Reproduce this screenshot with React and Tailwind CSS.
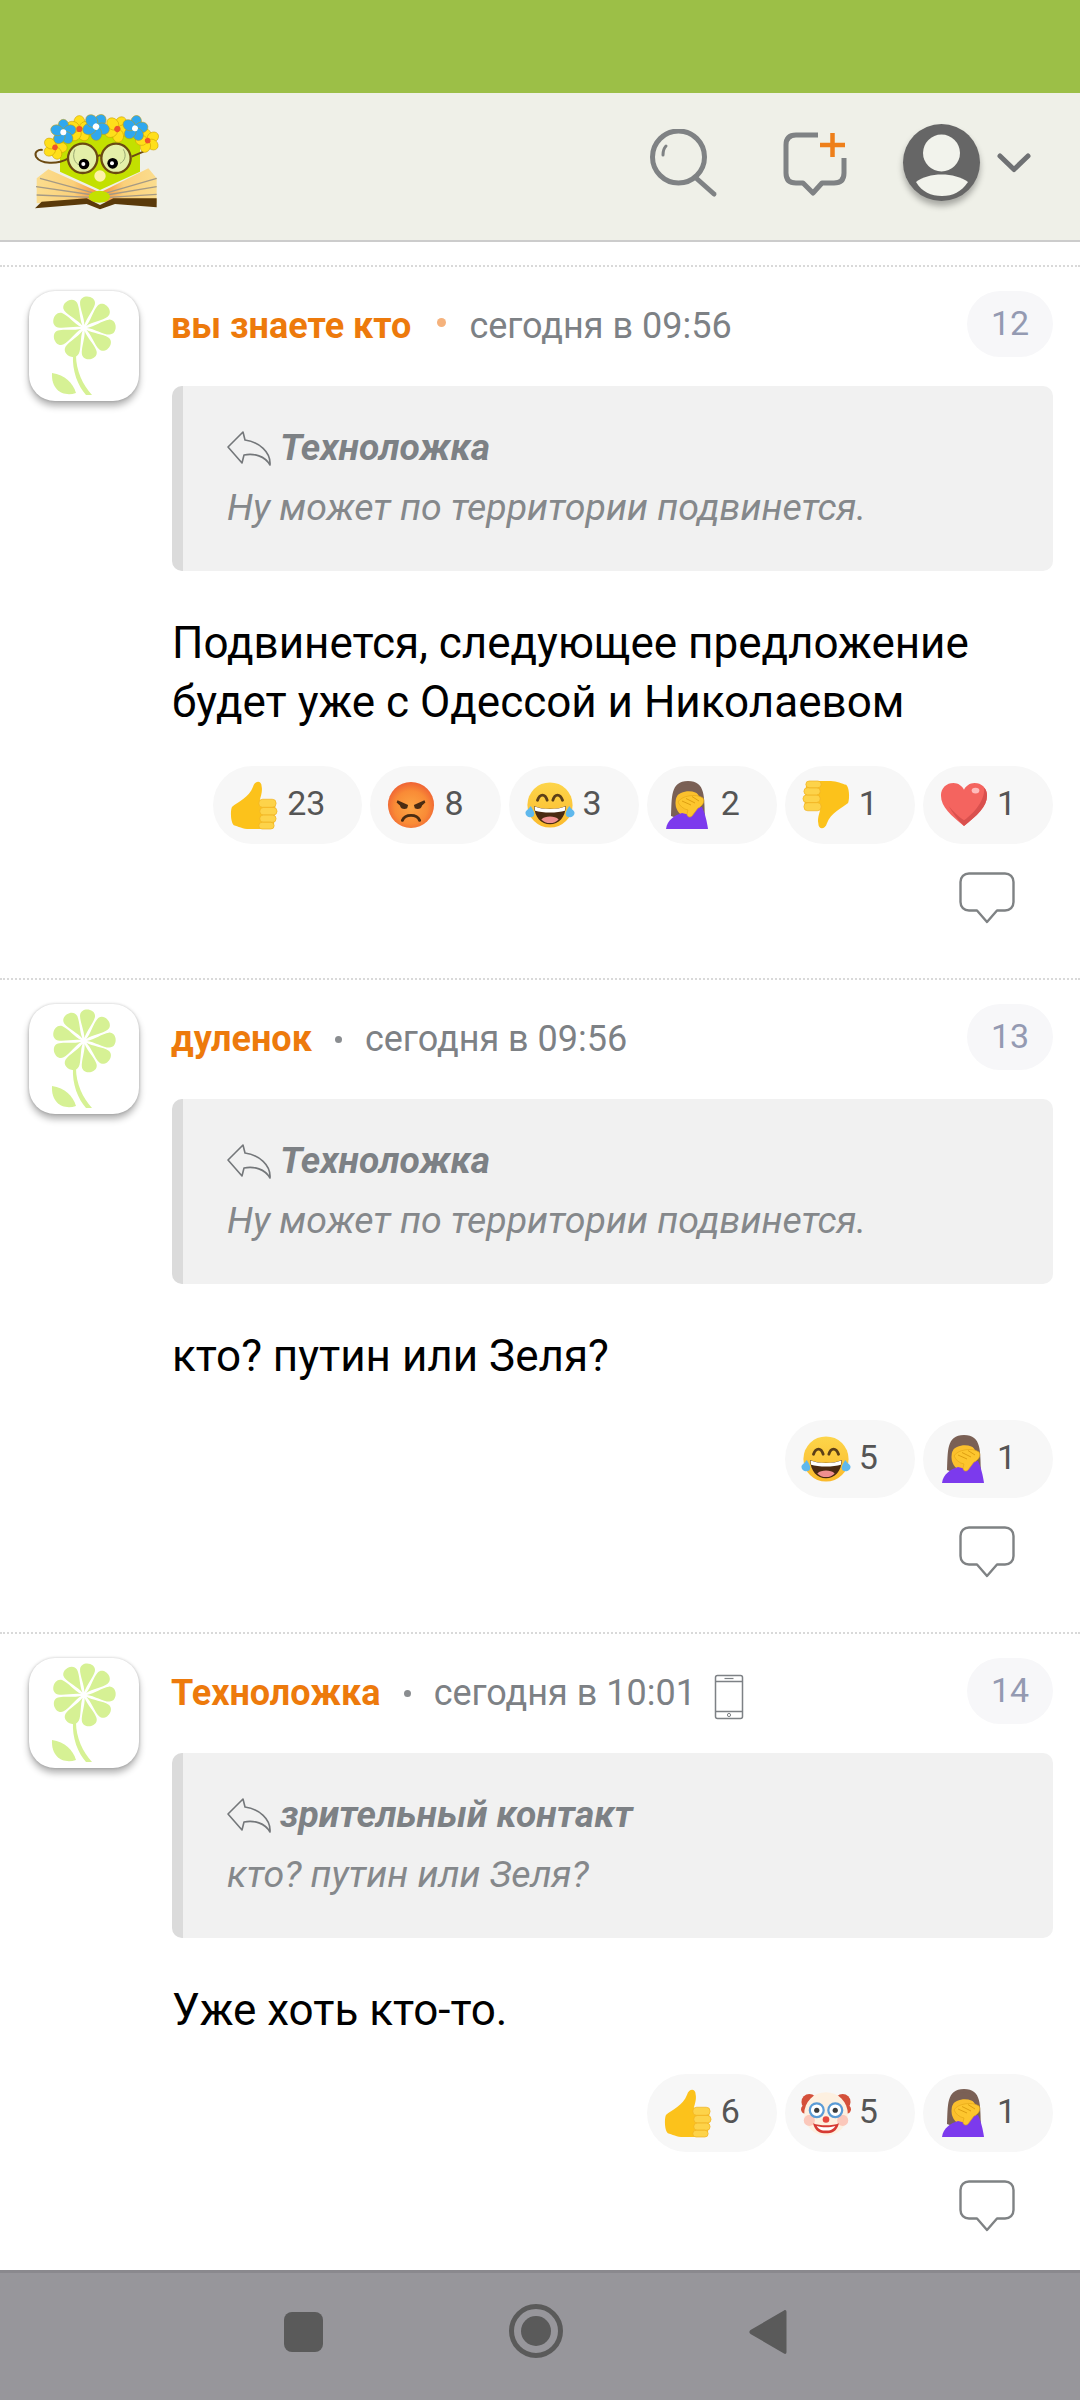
import React from "react";

// Emoji drawings, all on a 50x50 box
const Thumb = ({ down }) => (
  <svg viewBox="0 0 50 50" className="w-[48px] h-[50px]">
    <g transform={down ? "translate(50 50) scale(-1 -1)" : undefined}>
      <path d="M2 27C8 22 20 17 24 6C26 -1 33 -1 33 6C34 11 32 16 31 20L40 20C46 20 48 24 47 30L46 44C45 48 42 50 38 50L20 50C14 50 8 47 4 46C1 44 0 32 2 27Z" fill="#fcc21b" />
      <rect x="30" y="19" width="18" height="8.5" rx="4" fill="#fdd34a" stroke="#f0b020" strokeWidth="0.7" />
      <rect x="31" y="27.5" width="18" height="8" rx="4" fill="#fdd34a" stroke="#f0b020" strokeWidth="0.7" />
      <rect x="31" y="35.5" width="17" height="7.5" rx="3.7" fill="#fdd34a" stroke="#f0b020" strokeWidth="0.7" />
      <rect x="30" y="43" width="16" height="7" rx="3.5" fill="#fdd34a" stroke="#f0b020" strokeWidth="0.7" />
    </g>
  </svg>
);

const Angry = () => (
  <svg viewBox="0 0 50 50" className="w-[48px] h-[48px]">
    <defs>
      <radialGradient id="angryFace" cx="0.5" cy="0.55" r="0.55">
        <stop offset="0" stopColor="#fca544" />
        <stop offset="0.65" stopColor="#f98b36" />
        <stop offset="1" stopColor="#ef6234" />
      </radialGradient>
    </defs>
    <circle cx="25" cy="25" r="24" fill="url(#angryFace)" />
    <path d="M11 20L22 25L21 28.5C18 30 14 29 13.5 25.5L10 22.5ZM39 20L28 25L29 28.5C32 30 36 29 36.5 25.5L40 22.5Z" fill="#4a2c12" />
    <path d="M16 41C19 34 31 34 34 41" stroke="#4a2c12" strokeWidth="3" fill="none" strokeLinecap="round" />
  </svg>
);

const Joy = () => (
  <svg viewBox="0 0 52 50" className="w-[52px] h-[50px]">
    <defs>
      <linearGradient id="joyFace" x1="0" y1="0" x2="0" y2="1">
        <stop offset="0" stopColor="#fdd54a" />
        <stop offset="1" stopColor="#fbba2c" />
      </linearGradient>
    </defs>
    <circle cx="26" cy="25" r="23.5" fill="url(#joyFace)" />
    <path d="M13 20C15.5 13 21 13 23 20M29 20C31 13 36.5 13 39 20" stroke="#5c3f18" strokeWidth="3" fill="none" strokeLinecap="round" />
    <path d="M9.5 26C18 30 34 30 42.5 26C42 38 35 45 26 45C17 45 10 38 9.5 26Z" fill="#4a2a12" />
    <path d="M10 26.5C18 30 34 30 42 26.5L41.5 31C34 33.5 18 33.5 10.5 31Z" fill="#fff" />
    <path d="M17 40C21 36 31 36 35 40C31 45 21 45 17 40Z" fill="#ef8f8f" />
    <path d="M6 26C9 31 11 34 8.5 37C5.5 39 0.5 37 0.5 33C0.5 31 4 29 6 26Z" fill="#5fb8ec" />
    <path d="M46 26C43 31 41 34 43.5 37C46.5 39 51.5 37 51.5 33C51.5 31 48 29 46 26Z" fill="#5fb8ec" />
  </svg>
);

const Facepalm = () => (
  <svg viewBox="0 0 44 50" className="w-[44px] h-[50px]">
    <path d="M5 36C6 18 4 1 22 1C40 1 38 18 39 36C33 39 11 39 5 36Z" fill="#7a6055" />
    <ellipse cx="22" cy="23" rx="12.5" ry="14" fill="#fbc02d" />
    <path d="M9 18C14 10 29 9 34 16C32 7 28 4 22 4C15 4 10 10 9 18Z" fill="#7a6055" />
    <path d="M0 49C1 40 9 35 16 33L24 35L30 28L36 27C39 33 41 42 42 49Z" fill="#7c3aed" />
    <path d="M12 22C15 16 30 13 37 18C39 21 37 26 32 28L26 36C24 38 21 37 21 34L22 30C17 29 14 26 12 22Z" fill="#fdc62e" stroke="#e2a414" strokeWidth="0.6" />
    <path d="M16 21L25 25M20 18.5L29 23M26 16.5L33 21" stroke="#d99a0e" strokeWidth="0.9" fill="none" />
  </svg>
);

const Heart = () => (
  <svg viewBox="0 0 50 50" className="w-[50px] h-[48px]">
    <path d="M25 47C12 36 1 27 1 15C1 7 7 2 14 2C19 2 23 5 25 9C27 5 31 2 36 2C43 2 49 7 49 15C49 27 38 36 25 47Z" fill="#f4645f" />
    <path d="M25 47C38 36 49 27 49 15C49 12 48 9 46 7C47 20 36 33 25 41C19 37 13 31 9 26C13 33 19 41 25 47Z" fill="#d9504e" />
    <ellipse cx="37" cy="10" rx="4" ry="3" fill="#fbb" />
  </svg>
);

const Clown = () => (
  <svg viewBox="0 0 54 50" className="w-[54px] h-[50px]">
    <circle cx="9" cy="13" r="8.5" fill="#d4503a" />
    <circle cx="45" cy="13" r="8.5" fill="#d4503a" />
    <circle cx="5" cy="21" r="5" fill="#d4503a" />
    <circle cx="49" cy="21" r="5" fill="#d4503a" />
    <circle cx="27" cy="26" r="23.5" fill="#fdf0e0" />
    <circle cx="9" cy="33" r="6" fill="#fbc8bb" />
    <circle cx="45" cy="33" r="6" fill="#fbc8bb" />
    <circle cx="17" cy="22" r="7.5" fill="#fff" stroke="#5b9bd5" strokeWidth="2.4" />
    <circle cx="37" cy="22" r="7.5" fill="#fff" stroke="#5b9bd5" strokeWidth="2.4" />
    <circle cx="17" cy="22" r="2.8" fill="#3a3a3a" />
    <circle cx="37" cy="22" r="2.8" fill="#3a3a3a" />
    <path d="M13 36C20 39 34 39 41 36C39 45 33 47 27 47C21 47 15 45 13 36Z" fill="#d63a33" />
    <path d="M17 39C23 41 31 41 37 39C35 43 31 44 27 44C23 44 19 43 17 39Z" fill="#fff" />
    <circle cx="27" cy="32" r="3.6" fill="#e5483f" />
  </svg>
);

const emojis = { up: <Thumb />, down: <Thumb down />, angry: <Angry />, joy: <Joy />, palm: <Facepalm />, heart: <Heart />, clown: <Clown /> };

// Small line icons
const ReplyIcon = () => (
  <svg viewBox="0 0 45 35" className="w-[45px] h-[35px] shrink-0">
    <path d="M16 1L1 16L15 32L17 24C27 22 38 25 43 34C44 21 32 11 18 9Z" fill="none" stroke="#74777a" strokeWidth="1.6" strokeLinejoin="round" />
  </svg>
);

const BubbleIcon = () => (
  <svg viewBox="0 0 56 52" className="w-[56px] h-[52px]">
    <path d="M10 1.5H46C51 1.5 54.5 5 54.5 10V30C54.5 35 51 38.5 46 38.5H38L28 50L18 38.5H10C5 38.5 1.5 35 1.5 30V10C1.5 5 5 1.5 10 1.5Z" fill="none" stroke="#7f8284" strokeWidth="2.4" strokeLinejoin="round" />
  </svg>
);

const PhoneIcon = () => (
  <svg viewBox="0 0 30 46" className="w-[30px] h-[46px] ml-[18px] mt-[16px] shrink-0">
    <rect x="1.5" y="1.5" width="27" height="43" rx="2" fill="none" stroke="#7d8185" strokeWidth="1.5" />
    <path d="M1.5 7.5H28.5M1.5 37.5H28.5" stroke="#7d8185" strokeWidth="1.3" />
    <path d="M10.5 4.5H19.5" stroke="#7d8185" strokeWidth="1.2" />
    <circle cx="15" cy="41" r="1.6" fill="none" stroke="#7d8185" strokeWidth="1" />
  </svg>
);

const FlowerAvatar = () => (
  <div className="w-[110px] h-[110px] ml-[29px] shrink-0 bg-white rounded-[26px] shadow-[0_5px_7px_rgba(0,0,0,0.3),0_0_3px_rgba(0,0,0,0.2)]">
    <svg viewBox="0 0 110 110" className="w-[110px] h-[110px]">
      {[8, 48, 88, 128, 168, 208, 248, 288, 328].map((a) => (
        <path key={a} transform={`translate(55 37) rotate(${a})`} d="M0-3C-1-10-7-19-7.5-25C-8-34 8-34 7.5-25C7-19 1-10 0-3Z" fill="#d6f194" />
      ))}
      <path d="M44 64H47C47 80 54 94 63 104H57C49 95 43 80 44 64Z" fill="#d6f194" />
      <path d="M23 82C36 84 44 92 47 102C35 106 22 100 23 82Z" fill="#d6f194" />
    </svg>
  </div>
);

// Wreath flower for the logo
const WreathFlower = ({ x, y, r, petal, core, rot = 0 }) => (
  <g transform={`translate(${x} ${y}) rotate(${rot})`}>
    {[0, 72, 144, 216, 288].map((a) => (
      <ellipse key={a} cx="0" cy={-r * 0.62} rx={r * 0.5} ry={r * 0.6} fill={petal} stroke="#c79a00" strokeWidth="1.5" transform={`rotate(${a})`} />
    ))}
    <circle r={r * 0.28} fill={core} />
  </g>
);

const Logo = () => (
  <svg viewBox="30 60 420 300" className="w-[140px] h-[100px] ml-[30px] mt-[17px] shrink-0">
    <defs>
      <linearGradient id="pageLeft" x1="0" y1="0" x2="1" y2="0">
        <stop offset="0" stopColor="#fbdd8e" />
        <stop offset="0.6" stopColor="#fbd07a" />
        <stop offset="1" stopColor="#f58d3a" />
      </linearGradient>
      <linearGradient id="pageRight" x1="1" y1="0" x2="0" y2="0">
        <stop offset="0" stopColor="#fbdd8e" />
        <stop offset="0.6" stopColor="#fbd07a" />
        <stop offset="1" stopColor="#f58d3a" />
      </linearGradient>
    </defs>
    <path d="M120 130H360V245L240 300L120 245Z" fill="#c3e000" />
    <path d="M145 205C110 225 62 222 48 200C42 185 55 178 68 180" fill="none" stroke="#6b4a12" strokeWidth="6" />
    <path d="M335 200L372 184" stroke="#6b4a12" strokeWidth="6" />
    <path d="M85 238L235 305L235 335L50 340V265Z" fill="url(#pageLeft)" />
    <path d="M385 235L245 305L245 335L410 340V265Z" fill="url(#pageRight)" />
    <path d="M60 265L225 310M48 290L220 315M50 315L215 322M410 265L255 310M410 290L260 315M410 313L265 322" stroke="#a59a85" strokeWidth="4" />
    <path d="M45 355L65 335L200 325L240 345L280 325L410 325V352L285 342L240 358L200 342Z" fill="#5a3a0a" />
    <ellipse cx="238" cy="320" rx="32" ry="18" fill="#c3e000" />
    <circle cx="188" cy="205" r="44" fill="#e4efa8" stroke="#6b4a12" strokeWidth="7" />
    <circle cx="288" cy="205" r="44" fill="#e4efa8" stroke="#6b4a12" strokeWidth="7" />
    <path d="M232 200C238 194 240 194 246 200" fill="none" stroke="#6b4a12" strokeWidth="6" />
    <path d="M165 178C155 200 165 220 178 225M310 178C322 198 312 215 300 220" fill="none" stroke="#9aa873" strokeWidth="3" />
    <circle cx="192" cy="222" r="16" fill="#000" />
    <circle cx="190" cy="222" r="6" fill="#fff" />
    <circle cx="278" cy="220" r="16" fill="#000" />
    <circle cx="276" cy="220" r="6" fill="#fff" />
    <circle cx="240" cy="258" r="17" fill="#fff2a8" />
    <WreathFlower x={105} y={172} r={30} petal="#ffdf1a" core="#f0542a" rot={20} />
    <WreathFlower x={383} y={152} r={30} petal="#ffdf1a" core="#f0542a" rot={-15} />
    <WreathFlower x={178} y={117} r={33} petal="#ffdf1a" core="#f0542a" />
    <WreathFlower x={292} y={117} r={33} petal="#ffdf1a" core="#f0542a" rot={30} />
    <WreathFlower x={130} y={127} r={32} petal="#2fa8ef" core="#fff" />
    <WreathFlower x={228} y={110} r={34} petal="#2fa8ef" core="#fff" rot={35} />
    <WreathFlower x={345} y={115} r={32} petal="#2fa8ef" core="#fff" rot={10} />
  </svg>
);

const comments = [
  {
    id: 12,
    name: "вы знаете кто",
    dotClass: "w-[9px] h-[9px] bg-[#f5b27c] ml-[26px] mr-[23px] mt-[27px]",
    time: "сегодня в 09:56",
    replyTo: "Техноложка",
    quote: "Ну может по территории подвинется.",
    text: ["Подвинется, следующее предложение", "будет уже с Одессой и Николаевом"],
    reactions: [["up", 23], ["angry", 8], ["joy", 3], ["palm", 2], ["down", 1], ["heart", 1]],
  },
  {
    id: 13,
    name: "дуленок",
    dotClass: "w-[7px] h-[7px] bg-[#8a8d90] ml-[23px] mr-[23px] mt-[32px]",
    time: "сегодня в 09:56",
    replyTo: "Техноложка",
    quote: "Ну может по территории подвинется.",
    text: ["кто? путин или Зеля?"],
    reactions: [["joy", 5], ["palm", 1]],
  },
  {
    id: 14,
    name: "Техноложка",
    dotClass: "w-[7px] h-[7px] bg-[#8a8d90] ml-[23px] mr-[23px] mt-[32px]",
    time: "сегодня в 10:01",
    phone: true,
    replyTo: "зрительный контакт",
    quote: "кто? путин или Зеля?",
    text: ["Уже хоть кто-то."],
    reactions: [["up", 6], ["clown", 5], ["palm", 1]],
  },
];

const Comment = ({ c }) => (
  <div className="flex border-t-2 border-dotted border-[#d9d9d9] pt-[24px] h-[654px] first:h-[713px]">
    <FlowerAvatar />
    <div className="ml-[33px] w-[881px] flex flex-col">
      <div className="flex items-start h-[95px] text-[36px] leading-[71px]">
        <span className="font-bold text-[#ed7a0c] -ml-[1px]">{c.name}</span>
        <span className={`${c.dotClass} rounded-full shrink-0`} />
        <span className="text-[#7d8185]">{c.time}</span>
        {c.phone && <PhoneIcon />}
        <span className="ml-auto w-[86px] h-[66px] rounded-full bg-[#f7f7f9] text-[#949ab2] text-center text-[34px] leading-[64px]">{c.id}</span>
      </div>
      <div className="h-[185px] bg-[#f1f1f1] border-l-[11px] border-[#dbdbdb] rounded-[10px] pl-[44px] pt-[41px] text-[#7d8185] italic text-[37.5px]">
        <div className="flex items-center h-[42px]">
          <ReplyIcon />
          <span className="font-bold ml-[8px] text-[37.2px]">{c.replyTo}</span>
        </div>
        <div className="mt-[17px] leading-[42px] text-[#85888b]">{c.quote}</div>
      </div>
      <div className="mt-[43px] text-[44px] leading-[59px] text-black">
        {c.text.map((line) => (
          <div key={line}>{line}</div>
        ))}
      </div>
      <div className="mt-[34px] flex justify-end gap-2">
        {c.reactions.map(([e, n]) => (
          <div key={e} className="h-[78px] flex items-center rounded-full bg-[#f7f7f7] pl-[16px] pr-[37px]">
            <span className="w-[50px] flex justify-center shrink-0">{emojis[e]}</span>
            <span className="ml-[8px] pb-[3px] text-[34px] text-[#555]">{n}</span>
          </div>
        ))}
      </div>
      <div className="mt-[28px] flex justify-end pr-[38px]">
        <BubbleIcon />
      </div>
    </div>
  </div>
);

export default function App() {
  return (
    <div className="w-[1080px] h-[2400px] flex flex-col overflow-hidden bg-white font-['Roboto',sans-serif]">
      <div className="h-[93px] shrink-0 bg-[#9cbf47]" />
      <header className="h-[149px] shrink-0 flex items-start bg-[#eff0e8] border-b-2 border-[#cccccc]">
        <Logo />
        <svg viewBox="0 0 70 70" className="w-[70px] h-[70px] ml-[478px] mt-[36px] shrink-0">
          <circle cx="30.5" cy="28" r="26" fill="none" stroke="#7f8284" strokeWidth="5" />
          <path d="M48 49L66 65" stroke="#7f8284" strokeWidth="5" strokeLinecap="round" />
          <path d="M15 26C15 22 16 19 18 17" stroke="#7f8284" strokeWidth="3" fill="none" strokeLinecap="round" />
        </svg>
        <svg viewBox="0 0 66 66" className="w-[66px] h-[66px] ml-[64px] mt-[38px] shrink-0">
          <path d="M36 4H14C7 4 4 8 4 14V42C4 49 8 52 14 52H21L31 62L40 52H52C59 52 62 48 62 42V27" fill="none" stroke="#7f8284" strokeWidth="5" strokeLinejoin="round" />
          <path d="M38 14H63M50.5 2V26" stroke="#ee7f1a" strokeWidth="4.5" />
        </svg>
        <div className="w-[77px] h-[77px] ml-[55px] mt-[31px] rounded-full bg-[#666666] overflow-hidden shrink-0 shadow-[0_5px_6px_rgba(0,0,0,0.3)]">
          <svg viewBox="0 0 77 77" className="w-[77px] h-[77px]">
            <circle cx="38.5" cy="29" r="18.5" fill="#f2f3ec" />
            <path d="M13 58C25 48 52 48 65 58C58 68 50 72 39 72C28 72 19 68 13 58Z" fill="#f2f3ec" />
          </svg>
        </div>
        <svg viewBox="0 0 34 20" className="w-[34px] h-[20px] ml-[17px] mt-[60px] shrink-0">
          <path d="M3 3L17 16.5L31 3" fill="none" stroke="#6f7173" strokeWidth="5" strokeLinecap="round" strokeLinejoin="round" />
        </svg>
      </header>
      <main className="flex-1 overflow-hidden pt-[23px]">
        {comments.map((c) => (
          <Comment key={c.id} c={c} />
        ))}
      </main>
      <nav className="h-[130px] shrink-0 bg-[#97969b] border-t-[3px] border-[#8a898e] flex items-start">
        <div className="w-[39px] h-[40px] ml-[284px] mt-[39px] rounded-[8px] bg-[#5a5a5a]" />
        <div className="w-[54px] h-[54px] ml-[186px] mt-[31px] rounded-full border-[5px] border-[#5a5a5a] flex items-center justify-center">
          <div className="w-[30px] h-[30px] rounded-full bg-[#5a5a5a]" />
        </div>
        <svg viewBox="0 0 38 46" className="w-[38px] h-[46px] ml-[186px] mt-[36px]">
          <path d="M35 1.5C36.5 0.5 37.5 1.5 37.5 3V43C37.5 45 36 45.5 35 44.5L1.5 25C0 24 0 22 1.5 21Z" fill="#5a5a5a" />
        </svg>
      </nav>
    </div>
  );
}
